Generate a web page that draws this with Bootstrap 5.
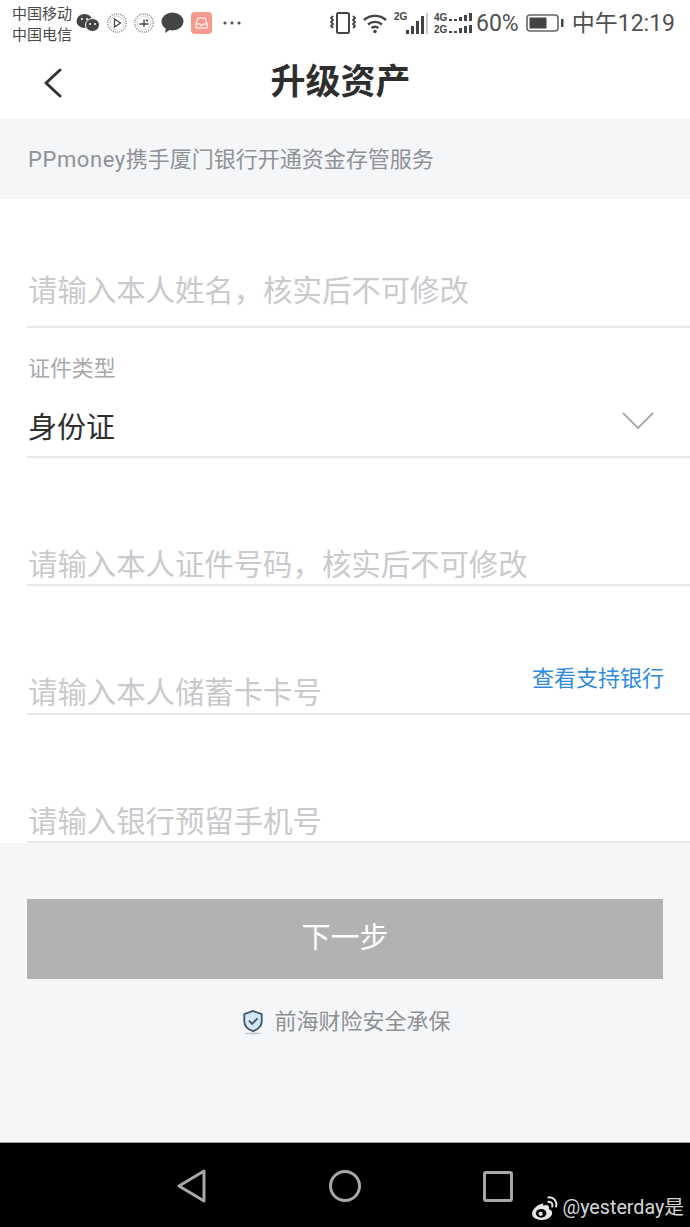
<!DOCTYPE html>
<html lang="zh-CN">
<head>
<meta charset="utf-8">
<title>升级资产</title>
<link rel="stylesheet" href="https://cdn.jsdelivr.net/npm/bootstrap@5.3.0/dist/css/bootstrap.min.css">
<style>
html, body { height: 100%; }
body {
  font-family: "Roboto", "Noto Sans CJK SC", sans-serif;
  background: #f5f6f8;
  width: 690px;
  height: 1227px;
  overflow: hidden;
}
.screen { height: 1227px; }
.status-row { height: 46px; padding: 0 15px 0 12px; color: #4a4a4a; }
.carrier { font-size: 15px; line-height: 21px; width: 62px; margin-top: 3px; }
.notif-icons { gap: 7px; margin-left: 2px; }
.sys-icons { margin-left: auto; gap: 6px; }
.pct { font-size: 23px; line-height: 1; color: #505050; margin-left: -2px; margin-right: 1px; }
.clock { font-size: 23px; line-height: 1; color: #505050; margin-left: 2px; }
.title-row { height: 73px; position: relative; }
.back-btn { position: absolute; left: 43px; top: 22px; }
.page-title { font-size: 35px; font-weight: 700; color: #2e2e2e; line-height: 1; margin: -1px 0 0 -9px; }
.notice { height: 80px; background: #f5f6f8; color: #909297; font-size: 22px; padding-left: 28px; }
.latin-name { letter-spacing: .58px; }
.form-area { height: 644px; padding-left: 27px; }
.field { border-bottom: 2px solid #e7e8ea; position: relative; display: flex; align-items: flex-end; color: #c9cacd; font-size: 29.4px; line-height: 1; padding-left: 1px; }
.f-name { height: 129px; padding-bottom: 20px; }
.f-type { height: 130px; flex-direction: column; align-items: flex-start; justify-content: flex-start; padding-top: 30px; }
.f-id { height: 128px; padding-bottom: 4px; }
.f-card { height: 129px; padding-bottom: 5px; }
.f-phone { height: 128px; padding-bottom: 4px; }
.type-label { font-size: 21.9px; color: #a8a9ac; line-height: 1; }
.type-value { font-size: 29px; color: #2f2f2f; line-height: 1; margin-top: 34px; }
.chevron { position: absolute; right: 35px; top: 83px; }
.bank-link { position: absolute; right: 26px; top: 82px; font-size: 22px; color: #2f8ae0; text-decoration: none; line-height: 1; }
.action-area { height: 299px; padding: 56px 27px 0; }
.next-btn { width: 636px; height: 80px; background: #b2b2b2; color: #fff; font-size: 29px; border: 0; border-radius: 0; opacity: 1; }
.next-btn:disabled { background: #b2b2b2; color: #fff; opacity: 1; }
.assure { color: #8e9095; font-size: 22px; margin-top: 26px; gap: 10px; padding-left: 3px; line-height: 34px; }
.nav-strip { height: 85px; background: #000; border-top: 1px solid #9a9a9a; position: relative; }
.nav-keys { position: absolute; left: 176px; top: 25px; }
.key-home { margin-left: 120px; }
.key-recent { margin-left: 121px; }
.watermark { position: absolute; right: 6px; bottom: 6px; color: #d6d6d6; font-size: 19.7px; line-height: 26px; gap: 4px; }
</style>
</head>
<body>
<div class="screen d-flex flex-column">
  <div class="bg-white">
    <!-- Phone status bar -->
    <div class="status-row d-flex align-items-center">
      <div class="carrier flex-shrink-0">中国移动<br>中国电信</div>
      <div class="notif-icons d-flex align-items-center">
        <svg width="24" height="22" viewBox="0 0 24 22"><ellipse cx="8.500" cy="9" rx="8" ry="7" fill="#444"/><ellipse cx="16.500" cy="13" rx="7" ry="6.500" fill="#444" stroke="#fff" stroke-width="1"/><circle cx="6" cy="7" r="1" fill="#fff"/><circle cx="11" cy="7" r="1" fill="#fff"/><circle cx="14" cy="12" r="1" fill="#fff"/><circle cx="19" cy="12" r="1" fill="#fff"/></svg>
        <svg width="20" height="20" viewBox="0 0 20 20" fill="none"><circle cx="10" cy="10" r="9.200" stroke="#8a8a8a" stroke-width="1.300" stroke-dasharray="1.200 1"/><circle cx="10" cy="10" r="7" stroke="#d5d5d5"/><path d="M7.500 6v8l6-4z" stroke="#444" stroke-width="1.300"/></svg>
        <svg width="20" height="20" viewBox="0 0 20 20" fill="none"><circle cx="10" cy="10" r="9.200" stroke="#8a8a8a" stroke-width="1.300" stroke-dasharray="1.200 1"/><circle cx="10" cy="10" r="7" stroke="#d5d5d5"/><path d="M5.500 11h9M10 6.500v7.500M12 6.500l2 2" stroke="#444" stroke-width="1.300"/></svg>
        <svg width="23" height="22" viewBox="0 0 23 22"><ellipse cx="11.500" cy="9.500" rx="11" ry="9" fill="#444"/><path d="M5 15l-1 6 6-4z" fill="#444"/></svg>
        <svg width="21" height="22" viewBox="0 0 21 22" fill="none"><rect width="21" height="22" rx="4" fill="#f59a8c"/><path d="M5 12l2-6h7l2 6v4H5zM5 12h4l1 1.500h1l1-1.500h4" stroke="#fff" stroke-width="1.100"/></svg>
        <svg class="ms-1" width="18" height="4" viewBox="0 0 18 4"><circle cx="2" cy="2" r="1.600" fill="#555"/><circle cx="9" cy="2" r="1.600" fill="#555"/><circle cx="16" cy="2" r="1.600" fill="#555"/></svg>
      </div>
      <div class="sys-icons d-flex align-items-center">
        <svg width="26" height="24" viewBox="0 0 26 24" fill="none" stroke="#444"><rect x="7" y="2" width="12" height="20" rx="1.500" stroke-width="2"/><path d="M3 5L1 7l2 2-2 2 2 2-2 2 2 2M23 5l2 2-2 2 2 2-2 2 2 2-2 2" stroke-width="1.800"/></svg>
        <svg width="26" height="22" viewBox="0 0 26 22" fill="none" stroke="#444" stroke-width="2.400"><path d="M2 8c6-5.500 16-5.500 22 0M6 12.500c4-3.500 10-3.500 14 0M9.500 16c2-1.500 5-1.500 7 0"/><circle cx="13" cy="19.500" r="1.800" fill="#444" stroke="none"/></svg>
        <svg width="34" height="24" viewBox="0 0 34 24"><text x="0" y="9" font-family="Liberation Sans" font-size="10" font-weight="700" fill="#444">2G</text><rect x="12" y="19" width="3" height="4" fill="#444"/><rect x="17" y="15" width="3" height="8" fill="#444"/><rect x="22" y="10" width="3" height="13" fill="#444"/><rect x="27" y="5" width="3" height="18" fill="#444"/><rect x="32" y="2" width="2" height="21" fill="#ccc"/></svg>
        <svg width="38" height="24" viewBox="0 0 38 24"><text x="0" y="10" font-family="Liberation Sans" font-size="10" font-weight="700" fill="#444">4G</text><text x="0" y="22" font-family="Liberation Sans" font-size="10" font-weight="700" fill="#444">2G</text><path d="M15 10h3V8h-3zM20 10h3V8h-3zM25 10h3V6h-3zM30 10h3V4h-3zM35 10h3V2h-3zM15 22h3v-2h-3zM20 22h3v-2h-3zM25 22h3v-5h-3zM30 22h3v-7h-3zM35 22h3v-8h-3z" fill="#444"/></svg>
        <span class="pct">60%</span>
        <svg width="38" height="20" viewBox="0 0 38 20" fill="none"><rect x="1" y="2" width="31" height="16" rx="3" stroke="#666" stroke-width="1.600"/><rect x="3.500" y="4.500" width="17" height="11" fill="#444"/><rect x="35" y="6" width="2.500" height="8" fill="#444"/></svg>
        <span class="clock">中午12:19</span>
      </div>
    </div>
    <!-- Page heading -->
    <div class="title-row d-flex align-items-center justify-content-center">
      <svg class="back-btn" width="20" height="30" viewBox="0 0 20 30" fill="none"><path d="M17 2L3 15l14 13" stroke="#333" stroke-width="3" stroke-linecap="round" stroke-linejoin="round"/></svg>
      <h1 class="page-title">升级资产</h1>
    </div>
  </div>

  <div class="notice d-flex align-items-center"><span><span class="latin-name">PPmoney</span>携手厦门银行开通资金存管服务</span></div>

  <!-- Identity and bank card form -->
  <div class="form-area bg-white">
    <div class="field f-name">请输入本人姓名，核实后不可修改</div>
    <div class="field f-type">
      <span class="type-label">证件类型</span>
      <span class="type-value">身份证</span>
      <svg class="chevron" width="34" height="20" viewBox="0 0 34 20" fill="none"><path d="M2 2l15 15L32 2" stroke="#a9abae" stroke-width="2"/></svg>
    </div>
    <div class="field f-id">请输入本人证件号码，核实后不可修改</div>
    <div class="field f-card">请输入本人储蓄卡卡号<a class="bank-link" href="#">查看支持银行</a></div>
    <div class="field f-phone">请输入银行预留手机号</div>
  </div>

  <div class="action-area">
    <button class="btn next-btn d-block" type="button" disabled>下一步</button>
    <div class="assure d-flex align-items-center justify-content-center">
      <svg width="22" height="26" viewBox="0 0 24 28" fill="none"><path d="M12 2l9.500 3.500v8c0 5.500-4 8.500-9.500 10.500-5.500-2-9.500-5-9.500-10.500v-8z" fill="#d3e8fa" stroke="#44566a" stroke-width="2"/><path d="M7.500 12.500l3.500 3.500 6-6" stroke="#44566a" stroke-width="2"/><ellipse cx="12" cy="26.500" rx="9" ry="1" fill="#c5c9cf"/></svg>
      <span>前海财险安全承保</span>
    </div>
  </div>

  <!-- Android navigation keys -->
  <div class="nav-strip">
    <div class="nav-keys d-flex align-items-center">
      <svg width="32" height="36" viewBox="0 0 32 36" fill="none" stroke="#a8a8a8" stroke-width="3" stroke-linejoin="round"><path d="M28 3v30L3 18z"/></svg>
      <svg class="key-home" width="34" height="34" viewBox="0 0 34 34" fill="none" stroke="#a8a8a8" stroke-width="3"><circle cx="17" cy="17" r="14.500"/></svg>
      <svg class="key-recent" width="30" height="31" viewBox="0 0 30 31" fill="none" stroke="#a8a8a8" stroke-width="3"><rect x="1.500" y="1.500" width="27" height="28" rx="1.500"/></svg>
    </div>
    <div class="watermark d-flex align-items-center">
      <svg width="27" height="25" viewBox="0 0 28 26" fill="none"><path d="M11 8c-5 1.500-10 6-10 10.500C1 22.500 6 25 11 25c6.500 0 11-3.500 11-7.500 0-2.500-2.500-3.500-3.500-4 1-2.500-.5-4.500-4-4-1 .2-2 .5-2 .5s1-3-1.500-2z" fill="#e8e8e8"/><ellipse cx="10.500" cy="18" rx="5.500" ry="4.500" fill="#000"/><circle cx="10" cy="18.500" r="2.200" fill="#e8e8e8"/><path d="M18 6c2.500-.5 5 2 4 5M18 1.500c5-1 9.500 4 8 9.500" stroke="#e8e8e8" stroke-width="2" stroke-linecap="round"/></svg>
      <span>@yesterday是</span>
    </div>
  </div>
</div>
</body>
</html>
